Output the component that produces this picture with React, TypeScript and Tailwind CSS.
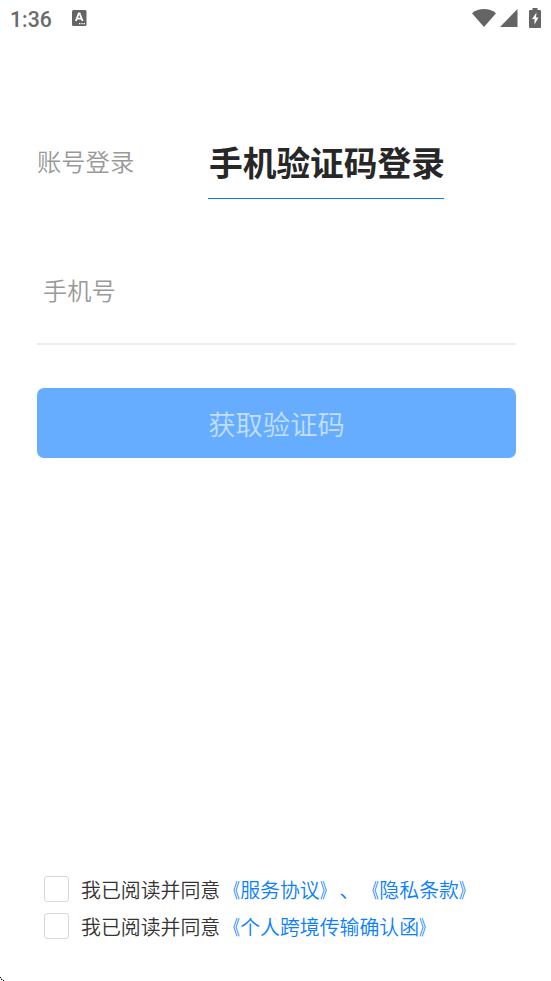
import { useState } from 'react'

interface Agreement {
  id: string
  titles: string[]
}

const agreements: Agreement[] = [
  { id: 'terms', titles: ['服务协议', '隐私条款'] },
  { id: 'transfer', titles: ['个人跨境传输确认函'] }
]

function StatusBar() {
  return (
    <div className="flex h-[36px] items-center pl-[10px] pr-[10px] text-[#646464]">
      <span className="w-[62px] pt-[3px] font-[Roboto] text-[21.2px] font-medium leading-[36px] text-[#6a6a6a]">1:36</span>
      <svg width="15" height="16" viewBox="0 0 15 16">
        <rect width="14.5" height="16" rx="1.5" fill="currentColor" />
        <path d="M3.8 11 L6.8 3.5 H7.6 L10.6 11 M5 8.6 H9.4" fill="none" stroke="#fff" strokeWidth="1.8" />
        <path d="M7 13.6h1.4M9.3 13.6h1.4M11.6 13.6h1.4" stroke="#fff" strokeWidth="1.2" />
      </svg>
      <div className="ml-auto flex items-center">
        <svg width="24" height="18" viewBox="0 0 24 18">
          <path d="M0 4.2C3.4 1.3 7.5 0 12 0s8.6 1.3 12 4.2L12 18z" fill="currentColor" />
        </svg>
        <svg className="ml-1" width="18" height="18" viewBox="0 0 18 18">
          <path d="M17.5 0v18H0z" fill="currentColor" />
        </svg>
        <svg className="ml-[11px]" width="12" height="20" viewBox="0 0 12 20">
          <path d="M3.5 0h5v2H11a1 1 0 0 1 1 1v16a1 1 0 0 1-1 1H1a1 1 0 0 1-1-1V3a1 1 0 0 1 1-1h2.500z" fill="currentColor" />
          <path d="M7.500 4.500L3 11h2.500v5.500l4-7H7z" fill="#fff" />
        </svg>
      </div>
    </div>
  )
}

export default function App() {
  const [phone, setPhone] = useState('')
  const [checked, setChecked] = useState<Record<string, boolean>>({})

  return (
    <div className="relative flex h-[981px] w-[551px] flex-col overflow-hidden bg-white font-['Noto_Sans_CJK_SC',sans-serif] font-[350]">
      <StatusBar />

      <div className="mt-[88px] flex h-[75px] items-start pl-[37px]">
        <button className="h-[75px] w-[171px] text-left text-[24.3px] text-[#999]">账号登录</button>
        <button className="h-[75px] w-[236px] whitespace-nowrap border-b border-[#0a7cf8] pl-px pt-[3px] text-[33.700px] font-bold text-[#272727]">
          手机验证码登录
        </button>
      </div>

      <div className="ml-[37px] mt-[38px] mr-[35px] flex h-[108px] items-center border-b-2 border-[#ececec] pt-px">
        <input
          className="w-full bg-transparent pl-[6px] text-[24.2px] text-[#272727] outline-none placeholder:text-[#999]"
          placeholder="手机号"
          value={phone}
          onChange={(e) => setPhone(e.target.value)}
        />
      </div>

      <button className="ml-[37px] mr-[35px] mt-[43px] h-[70px] rounded-[7px] bg-[#66adff] text-[27.3px] text-[#c2dfff]">
        获取验证码
      </button>

      <div className="mb-[36px] mt-auto flex flex-col pl-[44px] text-[19.900px] text-[#333] [text-spacing-trim:space-all]">
        {agreements.map((item) => (
          <div key={item.id} className="flex h-[37px] items-center">
            <input
              type="checkbox"
              className="mb-px mr-3 h-[26px] w-[25px] appearance-none rounded-[3px] border border-[#d8d8d8] checked:bg-[#0a7cf8]"
              checked={!!checked[item.id]}
              onChange={(e) => setChecked({ ...checked, [item.id]: e.target.checked })}
            />
            <span className="whitespace-nowrap leading-[30px]">
              我已阅读并同意
              {item.titles.map((title, i) => (
                <span key={title} className="text-[#0a80ff]">
                  {i > 0 && '、'}
                  <span className="inline-block origin-right scale-x-[0.7] font-normal">《</span>
                  {title}
                  <span className="inline-block origin-left scale-x-[0.7] font-normal">》</span>
                </span>
              ))}
            </span>
          </div>
        ))}
      </div>

      {/* pointer tip at the screen corner */}
      <svg className="absolute bottom-0 left-0" width="5" height="4" viewBox="0 0 5 4">
        <path d="M0 0h1v1h-1zM1 2h1v1h-1zM3 3h1v1h-1z" fill="#000" />
        <path d="M1 1h1v1h-1zM2 2h1v1h-1z" fill="#aaa" />
      </svg>
    </div>
  )
}
